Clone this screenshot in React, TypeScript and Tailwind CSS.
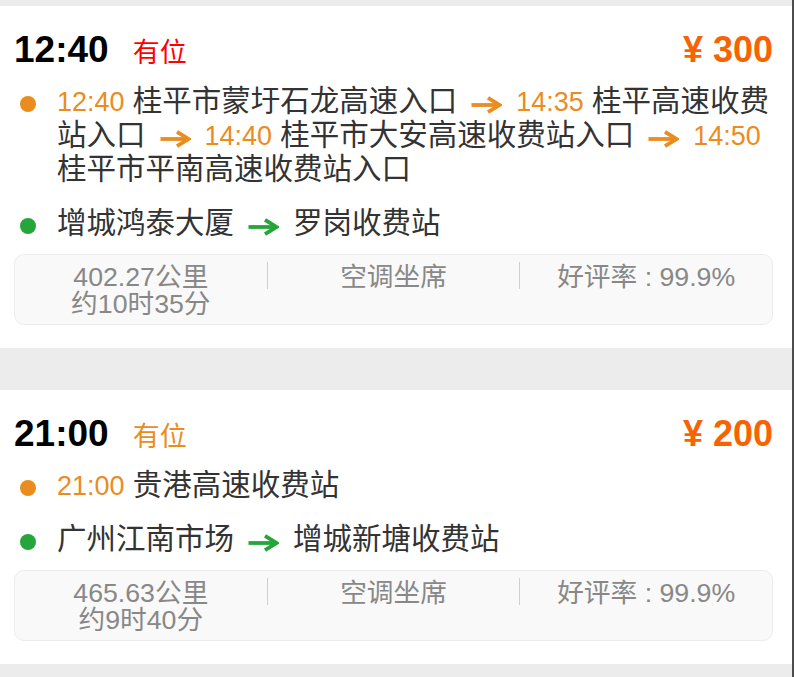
import React from 'react';

type Stop = { time: string; name: string };

interface Trip {
  depart: string;
  seatText: string;
  seatColor: string;
  price: number;
  stops: Stop[];
  from: string;
  to: string;
  distance: string;
  duration: string;
  seatType: string;
  rating: string;
}

const ORANGE = '#ea8c1e';
const GREEN = '#25a53a';

const trips: Trip[] = [
  {
    depart: '12:40',
    seatText: '有位',
    seatColor: 'text-[#ff0000]',
    price: 300,
    stops: [
      { time: '12:40', name: '桂平市蒙圩石龙高速入口' },
      { time: '14:35', name: '桂平高速收费站入口' },
      { time: '14:40', name: '桂平市大安高速收费站入口' },
      { time: '14:50', name: '桂平市平南高速收费站入口' },
    ],
    from: '增城鸿泰大厦',
    to: '罗岗收费站',
    distance: '402.27公里',
    duration: '约10时35分',
    seatType: '空调坐席',
    rating: '好评率 : 99.9%',
  },
  {
    depart: '21:00',
    seatText: '有位',
    seatColor: 'text-[#ea8c1e]',
    price: 200,
    stops: [{ time: '21:00', name: '贵港高速收费站' }],
    from: '广州江南市场',
    to: '增城新塘收费站',
    distance: '465.63公里',
    duration: '约9时40分',
    seatType: '空调坐席',
    rating: '好评率 : 99.9%',
  },
];

// thick right arrow between stops
const Arrow = ({ color }: { color: string }) => (
  <svg
    width="31"
    height="18"
    viewBox="0 0 31 18"
    fill="none"
    stroke={color}
    strokeWidth="3.8"
    className="mx-[14px] inline-block align-[-3px]"
  >
    <path d="M0.5 9h27.5" />
    <path d="M17 1.8l11.5 7.2-11.5 7.2" />
  </svg>
);

const Dot = ({ color }: { color: string }) => (
  <span className="ml-[6px] mr-[21px] mt-[12px] h-4 w-4 shrink-0 rounded-full" style={{ backgroundColor: color }} />
);

const TripCard = ({ trip }: { trip: Trip }) => (
  <div className="bg-white pb-[23px] pl-[14px] pr-[19px] pt-[24px]">
    <div className="flex items-baseline justify-between leading-[40px]">
      <div className="flex items-baseline">
        <span className="font-['Liberation_Sans'] text-[37px] font-bold text-black">{trip.depart}</span>
        <span className={`ml-[24px] text-[27px] ${trip.seatColor}`}>{trip.seatText}</span>
      </div>
      <span className="font-['Liberation_Sans'] text-[36px] font-bold text-[#f76300]">¥ {trip.price}</span>
    </div>

    <div className="mt-[11px] flex items-start">
      <Dot color={ORANGE} />
      <p className="flex-1 text-[29.5px] leading-[34px] text-[#333]">
        {trip.stops.map((s, i) => (
          <React.Fragment key={i}>
            {i > 0 && <Arrow color={ORANGE} />}
            <span className="text-[27px] leading-none text-[#ea8c1e]">{s.time}</span> {s.name}
          </React.Fragment>
        ))}
      </p>
    </div>

    <div className="mt-[20px] flex items-start">
      <Dot color={GREEN} />
      <p className="flex-1 text-[29.5px] leading-[34px] text-[#333]">
        {trip.from}
        <Arrow color={GREEN} />
        {trip.to}
      </p>
    </div>

    <div className="mt-[14px] flex items-start rounded-[10px] border border-[#ececec] bg-[#f9f9f9] pb-[6px] pt-[9px] text-center text-[26.7px] leading-[27px] text-[#888]">
      <div className="flex-1">
        <div>{trip.distance}</div>
        <div>{trip.duration}</div>
      </div>
      <div className="mt-[-2px] h-[27px] w-px bg-[#cfcfcf]" />
      <div className="flex-1">{trip.seatType}</div>
      <div className="mt-[-2px] h-[27px] w-px bg-[#cfcfcf]" />
      <div className="flex-1">{trip.rating}</div>
    </div>
  </div>
);

export default function App() {
  return (
    <div className="flex min-h-screen w-full font-['Liberation_Sans','Noto_Sans_CJK_SC',sans-serif]">
      <div className="w-[792px] bg-[#ececec] pt-[6px]">
        <div className="flex flex-col gap-[42px]">
          {trips.map((t) => (
            <TripCard key={t.depart} trip={t} />
          ))}
        </div>
      </div>
      <div className="w-[2px] bg-[#4d4d4d]" />
      <div className="flex-1 bg-white" />
    </div>
  );
}
